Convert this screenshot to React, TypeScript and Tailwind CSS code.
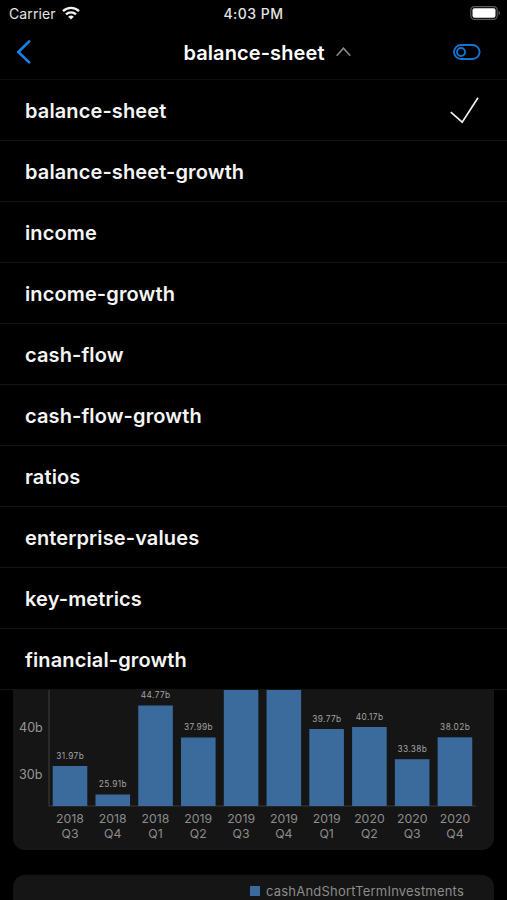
const reports = [
  'balance-sheet',
  'balance-sheet-growth',
  'income',
  'income-growth',
  'cash-flow',
  'cash-flow-growth',
  'ratios',
  'enterprise-values',
  'key-metrics',
  'financial-growth',
];

const bars = [
  { year: '2018', quarter: 'Q3', label: '31.97b', top: 77 },
  { year: '2018', quarter: 'Q4', label: '25.91b', top: 105.5 },
  { year: '2018', quarter: 'Q1', label: '44.77b', top: 16.5 },
  { year: '2019', quarter: 'Q2', label: '37.99b', top: 48.5 },
  { year: '2019', quarter: 'Q3', label: '', top: 0 },
  { year: '2019', quarter: 'Q4', label: '', top: 0 },
  { year: '2019', quarter: 'Q1', label: '39.77b', top: 40 },
  { year: '2020', quarter: 'Q2', label: '40.17b', top: 38 },
  { year: '2020', quarter: 'Q3', label: '33.38b', top: 70.2 },
  { year: '2020', quarter: 'Q4', label: '38.02b', top: 48.3 },
];

function StatusBar() {
  return (
    <div className="grid h-7 shrink-0 grid-cols-3 items-center text-[14px] text-[#e4e4e4]">
      <div className="flex items-center gap-1.5 pl-[9px]">
        <span className="pb-0.5 tracking-[0.1px]">Carrier</span>
        <svg className="-mt-[3px]" width="18" height="14" viewBox="0 0 18 14" fill="none" stroke="#f4f4f4" strokeWidth="2.4">
          <path d="M1 5.1a11.5 11.5 0 0 1 16 0" />
          <path d="M4 8.4a7.2 7.2 0 0 1 10 0" />
          <path d="M9 13.6 6.2 10.8a4 4 0 0 1 5.6 0Z" fill="#f4f4f4" stroke="none" />
        </svg>
      </div>
      <div className="pb-0.5 text-center font-medium tracking-[0.5px]">4:03 PM</div>
      <div className="flex justify-end pr-[6px] pb-0.5">
        <svg width="31" height="14" viewBox="0 0 31 14">
          <rect x="0.8" y="0.6" width="26.4" height="12.8" rx="3.6" fill="none" stroke="#5c5c5c" strokeWidth="1.2" />
          <rect x="2.5" y="2.3" width="23" height="9.4" rx="2" fill="#fff" />
          <path d="M28.6 4.8c2 .8 2 3.6 0 4.4Z" fill="#5c5c5c" />
        </svg>
      </div>
    </div>
  );
}

function Header() {
  return (
    <header className="flex h-[52px] shrink-0 items-center border-b border-[#0e0e0e] pr-[26px] pb-[3px] pl-[15px]">
      <svg width="28" height="24" viewBox="0 0 28 24" fill="none" stroke="#1683ec" strokeWidth="2.5" strokeLinecap="round" strokeLinejoin="round">
        <path d="M14.2 1.4 3.3 12l10.9 10.4" />
      </svg>
      <div className="flex flex-1 items-center justify-center gap-[11px] pl-[38px]">
        <h1 className="pt-0.5 text-[20px] font-semibold tracking-[0.1px] text-white">balance-sheet</h1>
        <svg width="15" height="10" viewBox="0 0 15 10" fill="none" stroke="#8c8c8c" strokeWidth="1.5">
          <path d="M.7 8.8 7.5 1.2l6.8 7.6" />
        </svg>
      </div>
      <svg width="28" height="16" viewBox="0 0 28 16" fill="none" stroke="#1472d4" strokeWidth="1.9">
        <rect x="1" y="1" width="25.6" height="14" rx="7" />
        <circle cx="8" cy="8" r="4" />
      </svg>
    </header>
  );
}

function Chart() {
  return (
    <svg width="481" height="160" viewBox="13 690 481 160" fontFamily="Inter, sans-serif">
      <path d="M49 689v117h427" fill="none" stroke="#393939" strokeWidth="1.2" />
      <g fill="#979797" fontSize="12.6">
        <text x="19" y="731.5">40b</text>
        <text x="19" y="779">30b</text>
      </g>
      {bars.map((bar, i) => {
        const center = 70 + i * 42.77;
        return (
          <g key={i} textAnchor="middle">
            <rect x={center - 17.3} y={689 + bar.top} width="34.6" height={117 - bar.top} fill="#3a6b9c" />
            <text x={center + 0.2} y={689 + bar.top - 7.5} fontSize="8.3" letterSpacing="0.4" fill="#a3a3a3">{bar.label}</text>
            <text x={center} y="823" fontSize="12.3" fill="#8c8c8c">{bar.year}</text>
            <text x={center} y="837.5" fontSize="12.3" fill="#8c8c8c">{bar.quarter}</text>
          </g>
        );
      })}
    </svg>
  );
}

export default function App() {
  return (
    <div className="flex h-[900px] w-[507px] flex-col overflow-hidden bg-black font-['Inter',sans-serif]">
      <StatusBar />
      <Header />
      <ul className="shrink-0">
        {reports.map((name, i) => (
          <li key={name} className="flex h-[61px] items-center justify-between border-b border-[#141414] pr-7 pl-[25px]">
            <span className="pt-0.5 text-[20px] font-semibold tracking-[0.12px] text-[#f5f5f5]">{name}</span>
            {i === 0 && (
              <svg width="29" height="27" viewBox="0 0 29 27" fill="none" stroke="#eee" strokeWidth="1.7">
                <path d="m.8 15.2 11.4 10L28 .7" />
              </svg>
            )}
          </li>
        ))}
      </ul>
      <section className="mx-[13px] h-[160px] shrink-0 overflow-hidden rounded-b-xl bg-[#151515]">
        <Chart />
      </section>
      <section className="mx-[13px] mt-[25px] flex h-[60px] shrink-0 items-start justify-end gap-1.5 rounded-t-xl bg-[#151515] pt-[6px] pr-[30px]">
        <span className="mt-[5px] h-[10px] w-[10px] bg-[#3a6b9c]" />
        <span className="text-[13px] leading-5 tracking-[0.2px] text-[#8c8c8c]">cashAndShortTermInvestments</span>
      </section>
    </div>
  );
}
